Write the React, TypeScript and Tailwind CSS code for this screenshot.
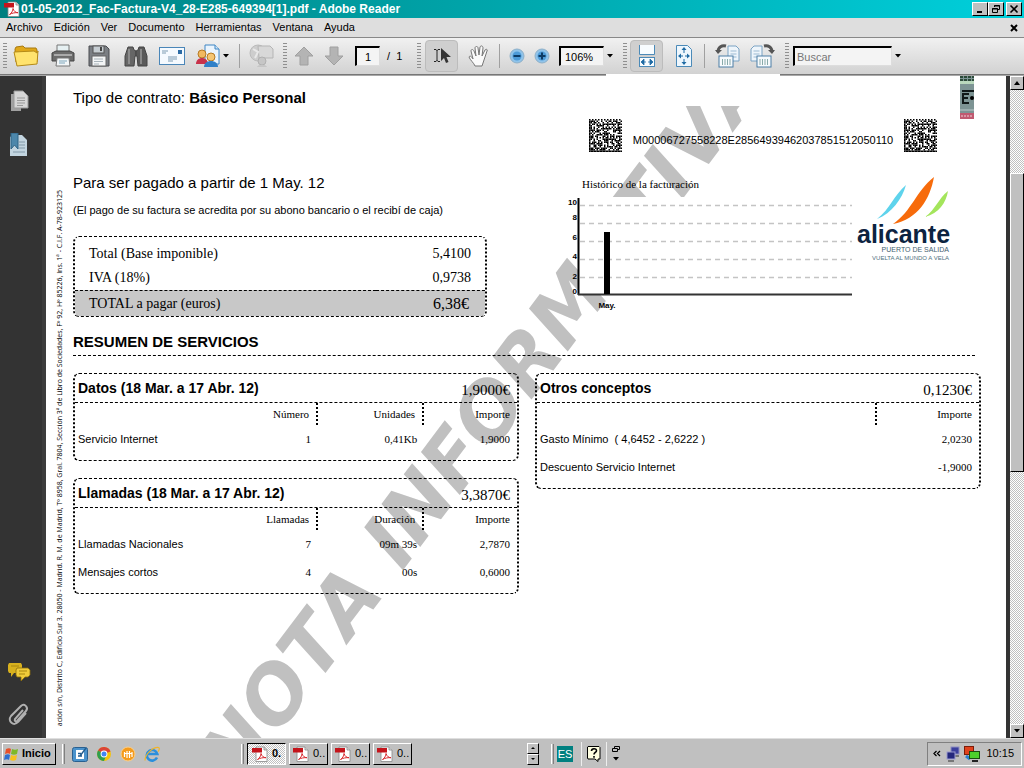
import React, { useState } from "react";

const SANS = "font-['Liberation_Sans',Arial,sans-serif]";
const SERIF = "font-['Liberation_Serif','Times_New_Roman',serif]";
const RAISED = "bg-[#c0c0c0] border border-t-white border-l-white border-r-black border-b-black";
const DITHER = "bg-[repeating-conic-gradient(#ffffff_0_25%,#c0c0c0_0_50%)] bg-size-[2px_2px]";
const BOX = "border-x-2 border-y border-x-black border-y-black [border-style:dashed_dotted] rounded-md";

const PdfIcon = ({ className = "" }: { className?: string }) => (
  <svg viewBox="0 0 16 16" className={className}>
    <path d="M4 1h8l3 3v11.500H4z" fill="#fff" stroke="#888" strokeWidth=".8" />
    <path d="M12 1v3h3" fill="#ddd" stroke="#888" strokeWidth=".8" />
    <rect x="0" y="2" width="10" height="4.500" fill="#c4141b" />
    <path d="M5.500 13.500c2-1 3.500-4 3.500-6 1 3 2.500 4 5 4.200-3-.2-6 .3-8.500 1.800z" fill="none" stroke="#d8262c" strokeWidth="1" />
  </svg>
);

const Grip = () => (
  <span className="w-1 h-7 shrink-0 bg-[radial-gradient(#8c8c8c_35%,transparent_45%)] bg-size-[2px_3px]" />
);

const Sep = () => <span className="w-px h-6 shrink-0 bg-[#a0a0a0]" />;

const Caret = () => (
  <svg viewBox="0 0 6 4" className="w-[6px] h-1">
    <path d="M0 0h6L3 3.500z" fill="#000" />
  </svg>
);

const ToolButton = ({
  label,
  className,
  active,
  children,
}: {
  label: string;
  className: string;
  active?: boolean;
  children: React.ReactNode;
}) => (
  <button
    aria-label={label}
    title={label}
    className={`h-8 shrink-0 flex items-center justify-center ${className} ${
      active ? "bg-[#cfcfcf] border border-[#bcbcbc] rounded-sm" : ""
    }`}
  >
    {children}
  </button>
);

const RotateIcon = ({ flip }: { flip?: boolean }) => (
  <svg viewBox="0 0 26 26" className="size-[26px]">
    <g transform={flip ? "translate(26 0) scale(-1 1)" : ""}>
      <path d="M13 3h8l3 3v12H13z" fill="#eef5fb" stroke="#7aa3c4" />
      <path d="M15.500 8h6M15.500 11h6M15.500 14h6" stroke="#9dbbd3" />
      <path d="M3 9C3 4 7 2 11 3" fill="none" stroke="#555" strokeWidth="3" />
      <path d="M0 7l7 0-4 4z" fill="#555" />
      <rect x="4" y="13" width="14" height="11" fill="#f6fafd" stroke="#4c7ea6" />
      <path d="M7.500 16v6M10 16v6M12.500 16v6M15 16v6" stroke="#8aa" />
    </g>
  </svg>
);

const TitleBar = () => (
  <header className="h-[18px] shrink-0 flex items-center bg-linear-to-r from-[#008080] to-[#00d0dc] pl-1 pr-[2px]">
    <PdfIcon className="size-4 mr-[1px]" />
    <h1 className="text-white font-bold text-[12px] leading-4 whitespace-nowrap">
      01-05-2012_Fac-Factura-V4_28-E285-649394[1].pdf - Adobe Reader
    </h1>
    <div className="ml-auto flex">
      <button aria-label="Minimizar" className={`w-4 h-[14px] flex items-center justify-center ${RAISED}`}>
        <svg viewBox="0 0 10 10" className="size-[10px]"><path d="M2 8h5" stroke="#000" strokeWidth="2" /></svg>
      </button>
      <button aria-label="Restaurar" className={`w-4 h-[14px] flex items-center justify-center ${RAISED}`}>
        <svg viewBox="0 0 10 10" className="size-[10px]" fill="none" stroke="#000">
          <path d="M3.500 3V1.500h5v4H7M3 2h6M1.500 4.500h5v4h-5zM1 5h6" />
        </svg>
      </button>
      <button aria-label="Cerrar" className={`w-4 h-[14px] ml-[2px] flex items-center justify-center ${RAISED}`}>
        <svg viewBox="0 0 10 10" className="size-[10px]"><path d="M1.500 1.500l7 7M8.500 1.500l-7 7" stroke="#000" strokeWidth="1.600" /></svg>
      </button>
    </div>
  </header>
);

const menus = ["Archivo", "Edición", "Ver", "Documento", "Herramientas", "Ventana", "Ayuda"];

const MenuBar = () => (
  <nav className="h-5 shrink-0 flex items-center gap-[11px] px-[6px] bg-[#dedede] border-b border-[#888] text-[11px] text-black">
    {menus.map((m) => (
      <button key={m}>{m}</button>
    ))}
    <button aria-label="Cerrar documento" className="ml-auto">
      <svg viewBox="0 0 8 8" className="size-2"><path d="M1 1l6 6M7 1L1 7" stroke="#000" strokeWidth="2" /></svg>
    </button>
  </nav>
);

const Toolbar = () => {
  const [page, setPage] = useState("1");
  const [zoom, setZoom] = useState("106%");
  const [search, setSearch] = useState("");
  const field = "h-5 border border-t-2 border-l-2 border-t-black border-l-black border-r-[#ddd] border-b-[#ddd] bg-[#f4f4f4] text-[11px] text-black outline-none";

  return (
    <div className="h-[37px] shrink-0 flex items-center bg-linear-to-b from-[#f1f1f1] to-[#d2d2d2] border-b border-[#777] pl-[3px] overflow-hidden">
      <Grip />
      <ToolButton label="Abrir" className="w-[38px]">
        <svg viewBox="0 0 26 22" className="w-[26px] h-[22px]">
          <path d="M2 4l1-2 7-1 2 2 11 0 1 2v12H3z" fill="#e0a81a" stroke="#a87a10" />
          <path d="M1 7l20-1 3 2 1-2-1 13-20 2z" fill="#ffe36e" stroke="#b48a18" />
        </svg>
      </ToolButton>
      <ToolButton label="Imprimir" className="w-9">
        <svg viewBox="0 0 24 24" className="size-6">
          <path d="M6 1h12v8H6z" fill="#e6f0f2" stroke="#777" />
          <path d="M1 9l4-2h14l4 2v8H1z" fill="#6c6c6c" stroke="#444" />
          <path d="M3 11h18" stroke="#aaa" strokeWidth="2" />
          <path d="M6 14h12l1 8H5z" fill="#f2f6f8" stroke="#777" />
          <path d="M8 17h8M8 19h6" stroke="#7fa6bb" />
        </svg>
      </ToolButton>
      <ToolButton label="Guardar" className="w-9">
        <svg viewBox="0 0 22 22" className="size-[22px]">
          <path d="M1 1h17l3 3v17H1z" fill="#7b7f84" stroke="#4a4d50" />
          <rect x="5" y="1" width="11" height="7" fill="#c6cdd2" stroke="#555" />
          <rect x="12" y="2" width="2" height="4" fill="#444" />
          <rect x="4" y="11" width="14" height="10" fill="#f3f5f6" stroke="#666" />
          <path d="M6 14h9M6 16.500h9M6 19h5" stroke="#a9b4bb" />
        </svg>
      </ToolButton>
      <ToolButton label="Buscar" className="w-[38px]">
        <svg viewBox="0 0 24 22" className="w-6 h-[22px]">
          <path d="M4 2h5l1 3 2 1v5h-1l-1 10H1V11z" fill="#666" stroke="#444" />
          <path d="M20 2h-5l-1 3-2 1v5h1l1 10h9V11z" fill="#5a5a5a" stroke="#444" />
          <path d="M5 4v15M17 4v15" stroke="#999" strokeWidth="1.500" />
        </svg>
      </ToolButton>
      <ToolButton label="Correo electrónico" className="w-[34px]">
        <svg viewBox="0 0 26 18" className="w-[26px] h-[18px]">
          <rect x=".5" y=".5" width="25" height="17" fill="#f5faff" stroke="#4a86b8" />
          <rect x="19" y="3" width="4" height="4" fill="#2c6ba5" />
          <path d="M3 4h6M3 6h4M9 10h9M9 12h9M9 14h5" stroke="#7d9bb2" />
        </svg>
      </ToolButton>
      <ToolButton label="Colaborar" className="w-[46px] gap-[2px]">
        <svg viewBox="0 0 26 24" className="w-[26px] h-6">
          <path d="M10 1h10l4 4v15H10z" fill="#eaf4fd" stroke="#3f86c4" />
          <path d="M20 1v4h4" fill="#cfe4f5" stroke="#3f86c4" />
          <circle cx="7" cy="10" r="4" fill="#f2b95f" stroke="#b67a24" />
          <path d="M1 20c0-8 12-8 12 0z" fill="#c8324a" />
          <circle cx="16" cy="13" r="4" fill="#f6c673" stroke="#b67a24" />
          <path d="M9 23c0-8 14-8 14 0z" fill="#2f80c8" />
        </svg>
        <Caret />
      </ToolButton>
      <span className="w-1" />
      <Sep />
      <ToolButton label="Documento en línea" className="w-[43px]">
        <svg viewBox="0 0 26 24" className="w-[26px] h-6">
          <circle cx="9" cy="9" r="8" fill="#cdcdcd" stroke="#bbb" />
          <path d="M9 2h12l3 3v9H10z" fill="#d8d8d8" stroke="#b5b5b5" />
          <path d="M4 5l5 3-3 6" stroke="#e8e8e8" strokeWidth="2" fill="none" />
          <circle cx="13" cy="17" r="4" fill="#c6c6c6" stroke="#b0b0b0" />
          <path d="M8 23c1-3 9-3 10 0z" fill="#c6c6c6" />
        </svg>
      </ToolButton>
      <Grip />
      <ToolButton label="Página anterior" className="w-[34px]">
        <svg viewBox="0 0 20 20" className="size-5">
          <path d="M10 1l9 9h-5v9H6v-9H1z" fill="#b4b4b4" stroke="#a0a0a0" />
        </svg>
      </ToolButton>
      <ToolButton label="Página siguiente" className="w-[26px]">
        <svg viewBox="0 0 20 20" className="size-5">
          <path d="M10 19l9-9h-5V1H6v9H1z" fill="#b4b4b4" stroke="#a0a0a0" />
        </svg>
      </ToolButton>
      <input aria-label="Página" value={page} onChange={(e) => setPage(e.target.value)} className={`w-[25px] ml-2 text-center ${field}`} />
      <span className="w-[37px] pl-[7px] text-[11px] text-black whitespace-pre">/  1</span>
      <Grip />
      <span className="w-1" />
      <ToolButton label="Seleccionar" className="w-[33px]" active>
        <svg viewBox="0 0 18 16" className="w-[18px] h-4">
          <path d="M1 1.500h2l1 1 1-1h2M1 13.500h2l1-1 1 1h2M4 2v11" fill="none" stroke="#222" />
          <path d="M8 0v13l3-3 2 5 2.500-1-2-5H18z" fill="#333" />
        </svg>
      </ToolButton>
      <ToolButton label="Mano" className="w-[41px]">
        <svg viewBox="0 0 22 22" className="size-[22px]">
          <path
            d="M7 21c-1-3-5-6-6-9 1-2 3 0 4 2L3 6c0-2 2-2 3 0l2 5-1-8c0-2 3-2 3 0l1 7 1-8c1-2 3-1 3 1l-1 8 3-6c1-1 3-1 2 1l-3 9-2 6z"
            fill="#fafafa"
            stroke="#777"
          />
        </svg>
      </ToolButton>
      <Sep />
      <ToolButton label="Alejar" className="w-[33px]">
        <svg viewBox="0 0 16 16" className="size-4">
          <circle cx="8" cy="8" r="7" fill="#8fc3ea" stroke="#8fb0c8" />
          <circle cx="8" cy="8" r="4.500" fill="#4d9bd8" />
          <path d="M4.500 8h7" stroke="#0d3c66" strokeWidth="2" />
        </svg>
      </ToolButton>
      <ToolButton label="Acercar" className="w-[18px]">
        <svg viewBox="0 0 16 16" className="size-4">
          <circle cx="8" cy="8" r="7" fill="#8fc3ea" stroke="#8fb0c8" />
          <circle cx="8" cy="8" r="4.500" fill="#4d9bd8" />
          <path d="M4.500 8h7M8 4.500v7" stroke="#0d3c66" strokeWidth="2" />
        </svg>
      </ToolButton>
      <input aria-label="Ampliación" value={zoom} onChange={(e) => setZoom(e.target.value)} className={`w-[45px] ml-2 pl-1 ${field}`} />
      <ToolButton label="Niveles de ampliación" className="w-[11px]"><Caret /></ToolButton>
      <span className="w-2" />
      <Grip />
      <span className="w-[3px]" />
      <ToolButton label="Ajustar ancho" className="w-[33px]" active>
        <svg viewBox="0 0 18 22" className="w-[18px] h-[22px]">
          <path d="M1.500 0v9.500h15V0" fill="#f8fcff" stroke="#4b8ab8" />
          <rect x="1.500" y="12.500" width="15" height="9" fill="#f8fcff" stroke="#4b8ab8" />
          <path d="M3 17l3-3v6zM15 17l-3-3v6zM5 17h3M10 17h3" fill="#1f6ba4" stroke="#1f6ba4" strokeWidth=".8" />
        </svg>
      </ToolButton>
      <ToolButton label="Ajustar página" className="w-[41px]">
        <svg viewBox="0 0 18 22" className="w-[18px] h-[22px]">
          <path d="M1.500.5h11l4 4v17h-15z" fill="#eef7fe" stroke="#4b8ab8" />
          <path d="M9 2l2.500 3h-5zM9 20l2.500-3h-5zM3 11l3-2.500v5zM15 11l-3-2.500v5z" fill="#1f6ba4" />
          <path d="M9 5v3M9 14v3M6 11h2M10 11h2" stroke="#1f6ba4" />
        </svg>
      </ToolButton>
      <Sep />
      <ToolButton label="Girar a la izquierda" className="w-[43px] pl-[3px]"><RotateIcon /></ToolButton>
      <ToolButton label="Girar a la derecha" className="w-7"><RotateIcon flip /></ToolButton>
      <span className="w-[9px]" />
      <Grip />
      <input
        aria-label="Buscar"
        placeholder="Buscar"
        value={search}
        onChange={(e) => setSearch(e.target.value)}
        className={`w-[99px] ml-1 pl-[2px] placeholder:text-[#777] ${field}`}
      />
      <ToolButton label="Opciones de búsqueda" className="w-[11px]"><Caret /></ToolButton>
    </div>
  );
};

const SidePanel = () => (
  <aside className="w-[46px] shrink-0 flex flex-col items-center bg-[#333] border-r-4 border-r-[#3c3c3c] pr-1 py-3">
    <button aria-label="Páginas" className="mt-[2px]">
      <svg viewBox="0 0 20 22" className="w-5 h-[22px]">
        <path d="M2 4h10v17H2z" fill="#a0a0a0" />
        <path d="M5 1h9l5 5v12H5z" fill="#d6d6d6" stroke="#999" />
        <path d="M8 8h8M8 10.500h8M8 13h8M8 15.500h6" stroke="#999" />
      </svg>
    </button>
    <button aria-label="Marcadores" className="mt-[21px]">
      <svg viewBox="0 0 20 24" className="w-5 h-6">
        <path d="M4 2h9l5 5v16H1V4z" fill="#c3d5e0" />
        <path d="M10 9h6M10 12h6M10 15h6M4 19h12" stroke="#8299a8" />
        <path d="M2 0h7v16l-3.500-4L2 16z" fill="#4d87ab" stroke="#2f6284" />
      </svg>
    </button>
    <button aria-label="Comentarios" className="mt-auto">
      <svg viewBox="0 0 24 20" className="w-6 h-5">
        <path d="M2 1h12l1 2v6l-2 2H7l-3 4v-4H2L1 9V3z" fill="#d8b11e" />
        <path d="M10 6h11l2 2v5l-2 2h-3l-4 4v-4h-4l-1-2V8z" fill="#f0cc3a" stroke="#8a6d0c" strokeWidth=".8" />
        <path d="M12 9h8M12 12h6M4 4h8" stroke="#a8860f" />
      </svg>
    </button>
    <button aria-label="Archivos adjuntos" className="mt-5">
      <svg viewBox="0 0 22 24" className="w-[22px] h-6" fill="none" stroke="#b0b0b0" strokeWidth="2">
        <path d="M15 8l-8 9c-1 2 1 3 2 2l9-10c3-4-2-8-5-5L3 14c-4 5 3 11 7 6l8-9" />
      </svg>
    </button>
  </aside>
);

// 22x22 module matrix: solid left and bottom edges, alternating top and right ones
const SIZE = 22;
const modules: [number, number][] = [];
let seed = 41;
for (let y = 0; y < SIZE; y++) {
  for (let x = 0; x < SIZE; x++) {
    seed = (seed * 1103515245 + 12345) % 2147483648;
    const edge = x === 0 || y === SIZE - 1;
    const clock = (y === 0 || x === SIZE - 1) && (x + y) % 2 === 0;
    const inner = x > 0 && y < SIZE - 1 && x < SIZE - 1 && y > 0 && Math.floor(seed / 65536) % 100 < 56;
    if (edge || clock || inner) modules.push([x, y]);
  }
}

const DataMatrix = () => (
  <svg viewBox={`0 0 ${SIZE} ${SIZE}`} className="size-[33px] shrink-0 bg-white">
    {modules.map(([x, y]) => (
      <rect key={`${x}-${y}`} x={x} y={y} width="1" height="1" />
    ))}
  </svg>
);

const axis = [
  ["10", 8],
  ["8", 23],
  ["6", 43],
  ["4", 62],
  ["2", 82],
  ["0", 97],
] as const;

const Chart = () => (
  <svg viewBox="0 0 287 114" className={`w-[287px] h-[114px] ${SANS}`}>
    <rect x="13" y="0" width="274" height="98" fill="#fff" />
    {[8, 26, 44, 62, 80].map((y) => (
      <path key={y} d={`M15 ${y + 0.5}H287`} stroke="#c4c4c4" strokeWidth="1.500" strokeDasharray="5 4" />
    ))}
    <path d="M13.500 1v97" stroke="#000" strokeWidth="2" />
    <path d="M13 97.500H287" stroke="#333" strokeWidth="2" />
    <rect x="39" y="35" width="6" height="62" />
    <g fontSize="8" fontWeight="bold" textAnchor="end">
      {axis.map(([t, y]) => (
        <text key={t} x="12" y={y}>{t}</text>
      ))}
    </g>
    <text x="42" y="111" fontSize="8" fontWeight="bold" textAnchor="middle">May.</text>
  </svg>
);

const AlicanteLogo = () => (
  <svg viewBox="0 0 96 90" className={`w-24 h-[90px] ${SANS}`}>
    <path d="M50 8C46 22 36 36 21 42 34 32 38 18 50 8z" fill="#5ed3ec" />
    <path d="M78 0c-4 22-16 42-41 47C56 34 60 14 78 0z" fill="#f76b0b" />
    <path d="M92 14c-2 12-9 22-23 26C80 32 82 22 92 14z" fill="#a4e55c" />
    <text x="1" y="66" fontSize="25" fontWeight="bold" fill="#0c2340">alicante</text>
    <text x="93" y="75" fontSize="7" textAnchor="end" fill="#3f6170">PUERTO DE SALIDA</text>
    <text x="93" y="83" fontSize="6" textAnchor="end" fill="#4f7180">VUELTA AL MUNDO A VELA</text>
  </svg>
);

type SectionProps = {
  title: string;
  amount: string;
  cols: { head: string; width: string }[];
  rows: string[][];
};

const Section = ({ title, amount, cols, rows }: SectionProps) => (
  <section className={`${BOX} pb-[7px]`}>
    <div className="h-[29px] flex items-center justify-between pl-[3px] pr-[7px] border-b border-dashed border-black">
      <h3 className="font-bold text-[14px] leading-5">{title}</h3>
      <span className={`pt-1 text-[15px] leading-5 ${SERIF}`}>{amount}</span>
    </div>
    <table aria-label={title} className="w-full table-fixed border-separate border-spacing-0 text-[11px] leading-4">
      <thead>
        <tr className={SERIF}>
          {cols.map((c, i) => (
            <th
              key={i}
              className={`h-[22px] p-0 font-normal text-right pr-[7px] ${c.width} ${
                i > 0 && i < cols.length - 1 ? "border-r-2 border-dotted border-black" : ""
              } ${cols.length === 2 && i === 0 ? "border-r-2 border-dotted border-black" : ""}`}
            >
              {c.head}
            </th>
          ))}
        </tr>
      </thead>
      <tbody>
        {rows.map((r) => (
          <tr key={r[0]}>
            {r.map((cell, i) => (
              <td key={i} className={`h-7 p-0 whitespace-pre ${i === 0 ? "pl-[3px] text-left" : `pr-[7px] text-right ${SERIF}`}`}>
                {cell}
              </td>
            ))}
          </tr>
        ))}
      </tbody>
    </table>
  </section>
);

const usageCols = (second: string, third: string) => [
  { head: "", width: "w-[36%]" },
  { head: second, width: "w-[19%]" },
  { head: third, width: "w-[24%]" },
  { head: "Importe", width: "w-[21%]" },
];

const Invoice = () => (
  <main className={`relative flex-1 min-w-0 flex overflow-hidden bg-white text-black ${SANS}`}>
    <div className="absolute inset-x-0 top-[30px] bottom-0 overflow-hidden pointer-events-none">
      <p className="absolute left-[192px] top-[617px] origin-[0_66px] -rotate-[53deg] whitespace-nowrap text-[78px] leading-none font-bold italic text-[#c0c0c0] font-['DejaVu_Sans',sans-serif] [font-kerning:none]">
        NOTA INFORMATIVA
      </p>
    </div>
    <svg viewBox="0 0 14 43" className="absolute top-0 right-8 w-[14px] h-[43px]">
      <rect width="14" height="43" fill="#7d9494" />
      <path d="M0 1h14M0 4h14" stroke="#2b4a38" strokeWidth="2" strokeDasharray="3 1" />
      <rect y="5" width="14" height="3" fill="#b9d8bd" />
      <path d="M2 15h12M3 17v11M3 18h6M3 22h5M3 27h6" stroke="#101818" strokeWidth="2" fill="none" />
      <circle cx="12" cy="22" r="2" />
      <path d="M0 34h14" stroke="#bccaca" />
      <rect y="37" width="14" height="6" fill="#c05a70" />
      <path d="M1 40h12" stroke="#f0d0d8" strokeDasharray="2 1" />
    </svg>

    <div className="relative w-[27px] shrink-0 pt-[114px] pl-2">
      <div className="h-0 flex items-start">
        <p className="[writing-mode:vertical-rl] rotate-180 whitespace-nowrap text-[7px] leading-[12px] text-black font-['Open_Sans',sans-serif]">
          ación s/n, Distrito C, Edificio Sur 3. 28050 - Madrid. R. M. de Madrid, Tº 8958, Gral. 7804, Sección 3ª de Libro de Sociedades, Fº 92, Hº 85226, Ins. 1ª - C.I.F. A-78-923125
        </p>
      </div>
    </div>

    <div className="relative flex-1 min-w-0 pr-[25px]">
      <div className="flex justify-between">
        <div className="w-[414px] pt-3">
          <p className="text-[15px] leading-5">
            Tipo de contrato: <b>Básico Personal</b>
          </p>
          <p className="mt-[65px] text-[15px] leading-5">Para ser pagado a partir de 1 May. 12</p>
          <p className="mt-[9px] text-[11px] leading-4">
            (El pago de su factura se acredita por su abono bancario o el recibí de caja)
          </p>
          <div className={`mt-[18px] pt-[5px] overflow-hidden bg-white ${BOX}`}>
            <table aria-label="Total de la factura" className={`w-full border-separate border-spacing-0 text-[14px] leading-5 ${SERIF}`}>
              <tbody>
                <tr>
                  <th className="h-6 p-0 pl-[14px] text-left font-normal">Total (Base imponible)</th>
                  <td className="p-0 pr-[14px] text-right">5,4100</td>
                </tr>
                <tr>
                  <th className="h-6 p-0 pl-[14px] text-left font-normal">IVA (18%)</th>
                  <td className="p-0 pr-[14px] text-right">0,9738</td>
                </tr>
                <tr className="bg-[#c8c8c8]">
                  <th className="h-[26px] p-0 pl-[14px] text-left font-normal border-t border-dashed border-black">TOTAL a pagar (euros)</th>
                  <td className="p-0 pr-4 text-right text-[16px] border-t border-dashed border-black">6,38€</td>
                </tr>
              </tbody>
            </table>
          </div>
        </div>

        <div className="w-[416px] pt-[43px]">
          <div className="flex items-start pl-6">
            <DataMatrix />
            <span className="w-[282px] pt-[13px] text-center text-[11px] leading-4">M00006727558228E28564939462037851512050110</span>
            <DataMatrix />
          </div>
          <div className="flex items-start mt-[25px]">
            <figure>
              <figcaption className={`pl-[17px] mb-[6px] text-[11px] leading-[14px] ${SERIF}`}>Histórico de la facturación</figcaption>
              <Chart />
            </figure>
            <div className="pl-1"><AlicanteLogo /></div>
          </div>
        </div>
      </div>

      <h2 className="mt-[15px] mr-[6px] pb-[3px] font-bold text-[15px] leading-5 border-b border-dashed border-black">
        RESUMEN DE SERVICIOS
      </h2>

      <div className="mt-[17px] grid grid-cols-2 gap-4 items-start">
        <div className="flex flex-col gap-[17px]">
          <Section
            title="Datos (18 Mar. a 17 Abr. 12)"
            amount="1,9000€"
            cols={usageCols("Número", "Unidades")}
            rows={[["Servicio Internet", "1", "0,41Kb", "1,9000"]]}
          />
          <Section
            title="Llamadas (18 Mar. a 17 Abr. 12)"
            amount="3,3870€"
            cols={usageCols("Llamadas", "Duración")}
            rows={[
              ["Llamadas Nacionales", "7", "09m 39s", "2,7870"],
              ["Mensajes cortos", "4", "00s", "0,6000"],
            ]}
          />
        </div>
        <Section
          title="Otros conceptos"
          amount="0,1230€"
          cols={[
            { head: "", width: "w-[77%]" },
            { head: "Importe", width: "w-[23%]" },
          ]}
          rows={[
            ["Gasto Mínimo  ( 4,6452 - 2,6222 )", "2,0230"],
            ["Descuento Servicio Internet", "-1,9000"],
          ]}
        />
      </div>
    </div>
  </main>
);

const ScrollBar = () => (
  <div className="w-[18px] shrink-0 flex flex-col border-l-4 border-l-[#333]">
    <button aria-label="Subir" className={`h-[14px] flex items-center justify-center ${RAISED}`}>
      <svg viewBox="0 0 6 4" className="w-[6px] h-1"><path d="M0 4h6L3 0z" /></svg>
    </button>
    <div className={`flex-[83] ${DITHER}`} />
    <div className={`flex-[299] ${RAISED}`} />
    <div className={`flex-[253] ${DITHER}`} />
    <button aria-label="Bajar" className={`h-[14px] flex items-center justify-center ${RAISED}`}>
      <Caret />
    </button>
  </div>
);

const BarLine = () => <span className="w-[3px] h-5 shrink-0 border-l border-l-white border-r border-r-[#808080]" />;

const Taskbar = () => (
  <footer className="h-[30px] shrink-0 flex items-center bg-[#c0c0c0] border-t border-[#dfdfdf] pl-[2px] pr-[2px] text-black text-[11px]">
    <button className={`w-[54px] h-[22px] flex items-center gap-[2px] pl-[1px] font-bold text-[11px] ${RAISED}`}>
      <svg viewBox="0 0 16 16" className="w-4 h-4 shrink-0">
        <path d="M2 3c2-1 4-1 5 0L6 8C5 7 3 7 1 8z" fill="#e8502a" />
        <path d="M8 3c2 1 4 1 6 0l-1 5c-2 1-4 1-6 0z" fill="#7db928" />
        <path d="M1 9c2-1 4-1 5 0l-1 5c-1-1-3-1-5 0z" fill="#2f6fd0" />
        <path d="M7 9c2 1 4 1 6 0l-1 5c-2 1-4 1-6 0z" fill="#f6c21c" />
      </svg>
      Inicio
    </button>
    <span className="w-[6px]" />
    <BarLine />
    <div className="flex items-center gap-2 pl-[7px]">
      <button aria-label="Mostrar escritorio">
        <svg viewBox="0 0 16 16" className="size-4">
          <rect x=".5" y="1.500" width="15" height="14" rx="2" fill="#4b93cc" stroke="#2a6090" />
          <path d="M4 4h8v9H4z" fill="#fff" />
          <path d="M6 10h4M6 7.500h3M8 10l6-8" stroke="#225c8e" strokeWidth="1.400" />
        </svg>
      </button>
      <button aria-label="Google Chrome">
        <svg viewBox="0 0 16 16" className="size-4">
          <circle cx="8" cy="8" r="7" fill="#f4c20d" />
          <path d="M8 8L2 4.500a7 7 0 0 1 12.500 1z" fill="#db4437" />
          <path d="M8 8l-6-3.500A7 7 0 0 0 8 15l2-5z" fill="#2f9e4f" />
          <circle cx="8" cy="8" r="3.400" fill="#fff" />
          <circle cx="8" cy="8" r="2.500" fill="#4285f4" />
        </svg>
      </button>
      <button aria-label="Reproductor">
        <svg viewBox="0 0 16 16" className="size-4">
          <circle cx="8" cy="8" r="7" fill="#f59b1c" stroke="#f8d090" />
          <path d="M4.500 6v5M7 5v7M9.500 5v7M12 6v5M4 7.500h8.500" stroke="#fff" strokeWidth="1.200" />
        </svg>
      </button>
      <button aria-label="Internet Explorer">
        <svg viewBox="0 0 16 16" className="size-4" fill="none">
          <path d="M13 11.500a5.300 5.300 0 1 1 .3-3.500H4" stroke="#2b8fdc" strokeWidth="2.600" />
          <path d="M1 14.500C1 8 9 1 14.500 1.500c1.500.5.5 3-.5 4" stroke="#f0b428" strokeWidth="1.200" />
        </svg>
      </button>
    </div>
    <span className="w-[81px]" />
    <BarLine />
    <div className="flex gap-[3px] pl-[3px]">
      <button className={`w-[39px] h-[22px] flex items-center gap-1 pl-1 font-bold border border-t-black border-l-black border-r-white border-b-white ${DITHER}`}>
        <PdfIcon className="size-4 shrink-0" />
        0.
      </button>
      {[1, 2, 3].map((n) => (
        <button key={n} className={`w-[39px] h-[22px] flex items-center gap-1 pl-[3px] ${RAISED}`}>
          <PdfIcon className="size-4 shrink-0" />
          0..
        </button>
      ))}
    </div>
    <div className="flex flex-col ml-[115px]">
      <button aria-label="Anterior" className={`w-3 h-[11px] flex items-center justify-center ${RAISED}`}>
        <svg viewBox="0 0 4 2" className="w-1 h-[2px]"><path d="M0 2h4L2 0z" /></svg>
      </button>
      <button aria-label="Siguiente" className={`w-3 h-[11px] flex items-center justify-center ${RAISED}`}>
        <svg viewBox="0 0 4 2" className="w-1 h-[2px]"><path d="M0 0h4L2 2z" /></svg>
      </button>
    </div>
    <span className="w-3" />
    <BarLine />
    <button className="w-4 h-4 ml-[3px] bg-[#008080] text-white text-[11px] leading-4">ES</button>
    <span className="w-2" />
    <span className="w-px h-6 bg-[#eee]" />
    <button aria-label="Ayuda" className="mx-[5px]">
      <svg viewBox="0 0 14 16" className="w-[14px] h-4">
        <path d="M1 .5h11l1 1V13h-2v2.500L8 13H1L.5 12V1z" fill="#ffffe1" stroke="#000" />
        <path d="M4.500 5c0-3 5-3 5-.3C9.500 6.500 7 6.500 7 8.500M7 10v1.800" fill="none" stroke="#000" strokeWidth="1.600" />
      </svg>
    </button>
    <span className="w-px h-6 bg-[#eee]" />
    <button aria-label="Opciones de idioma" className="ml-[5px] flex flex-col items-center gap-[5px]">
      <svg viewBox="0 0 8 6" className="w-2 h-[6px]" fill="none" stroke="#000">
        <path d="M2.500 2V.5h5v3H6M.5 2.500h5v3h-5z" />
      </svg>
      <Caret />
    </button>
    <div className="ml-auto h-6 flex items-center pl-[5px] pr-[7px] border border-t-[#808080] border-l-[#808080] border-r-white border-b-white">
      <button aria-label="Mostrar iconos ocultos" className="mr-[5px]">
        <svg viewBox="0 0 8 7" className="w-2 h-[7px]" fill="none" stroke="#000" strokeWidth="1.300">
          <path d="M3.500 1L1 3.500 3.500 6M7 1L4.500 3.500 7 6" />
        </svg>
      </button>
      <svg viewBox="0 0 14 16" className="w-[14px] h-4">
        <rect x="5" y="1" width="8" height="7" fill="#3b3f9c" stroke="#8c8cc0" />
        <path d="M7 10h6" stroke="#777" strokeWidth="2" />
        <rect x="1" y="6" width="8" height="7" fill="#23277c" stroke="#9a9ad0" />
        <path d="M2 15h6" stroke="#777" strokeWidth="2" />
      </svg>
      <svg viewBox="0 0 16 16" className="size-4 ml-1">
        <rect x=".5" y=".5" width="9" height="8" fill="#e0421c" stroke="#7c1c08" />
        <path d="M2 10l4 3" stroke="#2b7fd0" strokeWidth="3" />
        <rect x="5.500" y="5.500" width="10" height="7" fill="#4cd02c" stroke="#184c10" />
        <path d="M8 15h6" stroke="#222" strokeWidth="2" />
      </svg>
      <time className="ml-[6px] text-[11px]">10:15</time>
    </div>
  </footer>
);

const App: React.FC = () => {
  return (
    <div className={`h-screen flex flex-col overflow-hidden bg-[#c0c0c0] ${SANS}`}>
      <TitleBar />
      <MenuBar />
      <Toolbar />
      <div className="relative flex-1 min-h-0 flex border-t border-t-[#a8a8a8]">
        <SidePanel />
        <Invoice />
        <ScrollBar />
        <div className="absolute -top-[2px] left-[606px] w-[174px] h-[3px] bg-white" />
      </div>
      <Taskbar />
    </div>
  );
};

export default App;
